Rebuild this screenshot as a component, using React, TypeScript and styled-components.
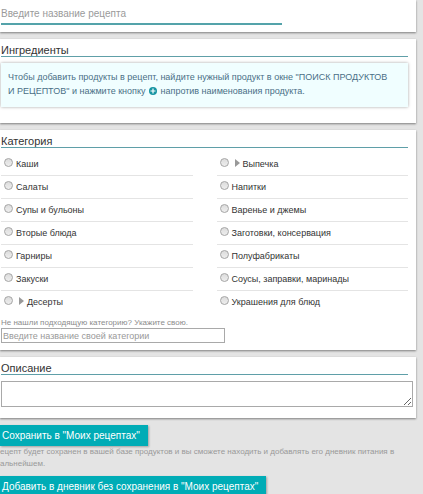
import React from "react";
import styled, { createGlobalStyle } from "styled-components";

const GlobalStyle = createGlobalStyle`
  * { box-sizing: border-box; }
  body {
    margin: 0;
    background: #e4e4e4;
    font-family: "Liberation Sans", Arial, sans-serif;
    color: #333;
  }
  html, body { overflow-x: hidden; }
`;

const Form = styled.form`
  display: flex;
  flex-direction: column;
  gap: 7px;
  padding-right: 7px;
`;

const Card = styled.section<{ $bottom: number }>`
  padding: 4px 8px ${(p) => p.$bottom}px 1px;
  background: #fff;
  box-shadow: 0 1px 2px rgba(0, 0, 0, 0.45);
`;

const Title = styled.h2`
  margin: 0;
  height: 14px;
  border-bottom: 1px solid #5f9fa8;
  font-size: 11px;
  line-height: 14px;
  font-weight: 400;
  color: #333;
`;

const NameInput = styled.input`
  display: block;
  width: 69%;
  height: 21px;
  padding: 0;
  border: 0;
  border-bottom: 2px solid #54a3aa;
  outline: 0;
  background: transparent;
  font: 10px "Liberation Sans", Arial, sans-serif;
  &::placeholder { color: #9a9a9a; opacity: 1; }
`;

const Hint = styled.p`
  margin: 6px 0 0;
  padding: 7px 8px 9px 7px;
  background: #f0feff;
  box-shadow: 0 0 3px rgba(0, 0, 0, 0.35);
  font-size: 9px;
  line-height: 14px;
  color: #4a6f86;
`;

const PlusIcon = styled.svg`
  width: 8px;
  height: 8px;
  margin: 0 1px;
  vertical-align: -1px;
`;

const Columns = styled.div`
  display: grid;
  grid-template-columns: 1fr 1fr;
  column-gap: 24px;
  margin-top: 5px;
`;

const List = styled.ul`
  margin: 0;
  padding: 0;
  list-style: none;
`;

const Row = styled.li`
  height: 23px;
  border-bottom: 1px solid #e4e4e4;
  &:last-child { border-bottom: 0; }
`;

const Option = styled.label`
  display: flex;
  align-items: center;
  height: 22px;
  padding-left: 3px;
  font-size: 9px;
  line-height: 14px;
  color: #333;
`;

const Radio = styled.input`
  appearance: none;
  flex: none;
  width: 9px;
  height: 9px;
  margin: 0 3px 4px 0;
  border: 1px solid #a5a5a5;
  border-radius: 50%;
  background: linear-gradient(#dcdcdc, #eee);
  &:checked { background: #00a5ae; }
`;

const Arrow = styled.svg`
  width: 5px;
  height: 8px;
  margin: 0 3px 3px;
`;

const Caption = styled.label`
  display: block;
  margin-top: 4px;
  font-size: 8px;
  line-height: 10px;
  color: #8c8c8c;
`;

const CategoryInput = styled.input`
  display: block;
  width: 55%;
  height: 15px;
  padding: 0 1px;
  border: 1px solid #a9a9a9;
  border-radius: 0;
  font: 9px "Liberation Sans", Arial, sans-serif;
  &::placeholder { color: #999; opacity: 1; }
`;

const Description = styled.textarea`
  display: block;
  width: calc(100% + 5px);
  height: 26px;
  margin-top: 6px;
  padding: 2px;
  border: 1px solid #a9a9a9;
  resize: vertical;
  font: 9px "Liberation Sans", Arial, sans-serif;
`;

const Actions = styled.div`
  display: flex;
  flex-direction: column;
  align-items: flex-start;
`;

const Button = styled.button`
  height: 21px;
  padding: 0 8px 0 2px;
  border: 0;
  background: #00acb6;
  box-shadow: 1px 1px 2px rgba(0, 0, 0, 0.3);
  font: 10px "Liberation Sans", Arial, sans-serif;
  color: #fff;
`;

const Note = styled.p`
  margin: 0 0 6px;
  font-size: 8px;
  line-height: 12px;
  color: #999;
`;

type Category = { name: string; nested?: boolean };

const left: Category[] = [
  { name: "Каши" },
  { name: "Салаты" },
  { name: "Супы и бульоны" },
  { name: "Вторые блюда" },
  { name: "Гарниры" },
  { name: "Закуски" },
  { name: "Десерты", nested: true },
];

const right: Category[] = [
  { name: "Выпечка", nested: true },
  { name: "Напитки" },
  { name: "Варенье и джемы" },
  { name: "Заготовки, консервация" },
  { name: "Полуфабрикаты" },
  { name: "Соусы, заправки, маринады" },
  { name: "Украшения для блюд" },
];

function CategoryList({ items }: { items: Category[] }) {
  return (
    <List>
      {items.map(({ name, nested }) => (
        <Row key={name}>
          <Option>
            <Radio type="radio" name="category" value={name} />
            {nested && (
              <Arrow viewBox="0 0 5 8" aria-hidden="true">
                <path d="M0 0L5 4L0 8Z" fill="#999" />
              </Arrow>
            )}
            {name}
          </Option>
        </Row>
      ))}
    </List>
  );
}

export default function App() {
  return (
    <>
      <GlobalStyle />
      <Form onSubmit={(e) => e.preventDefault()}>
        <Card $bottom={7}>
          <NameInput aria-label="Название рецепта" placeholder="Введите название рецепта" />
        </Card>

        <Card $bottom={16}>
          <Title>Ингредиенты</Title>
          <Hint>
            Чтобы добавить продукты в рецепт, найдите нужный продукт в окне "ПОИСК ПРОДУКТОВ
            <br />
            И РЕЦЕПТОВ" и нажмите кнопку{" "}
            <PlusIcon viewBox="0 0 8 8" aria-hidden="true">
              <circle cx="4" cy="4" r="4" fill="#1795a3" />
              <path d="M4 1.5V6.5M1.5 4H6.5" stroke="#fff" strokeWidth="1.2" />
            </PlusIcon>{" "}
            напротив наименования продукта.
          </Hint>
        </Card>

        <Card $bottom={7}>
          <Title>Категория</Title>
          <Columns>
            <CategoryList items={left} />
            <CategoryList items={right} />
          </Columns>
          <Caption htmlFor="own-category">Не нашли подходящую категорию? Укажите свою.</Caption>
          <CategoryInput id="own-category" placeholder="Введите название своей категории" />
        </Card>

        <Card $bottom={11}>
          <Title id="description-title">Описание</Title>
          <Description aria-labelledby="description-title" />
        </Card>

        <Actions>
          <Button type="submit">Сохранить в "Моих рецептах"</Button>
          <Note>
            ецепт будет сохранен в вашей базе продуктов и вы сможете находить и добавлять его
            дневник питания в альнейшем.
          </Note>
          <Button type="button">Добавить в дневник без сохранения в "Моих рецептах"</Button>
        </Actions>
      </Form>
    </>
  );
}
